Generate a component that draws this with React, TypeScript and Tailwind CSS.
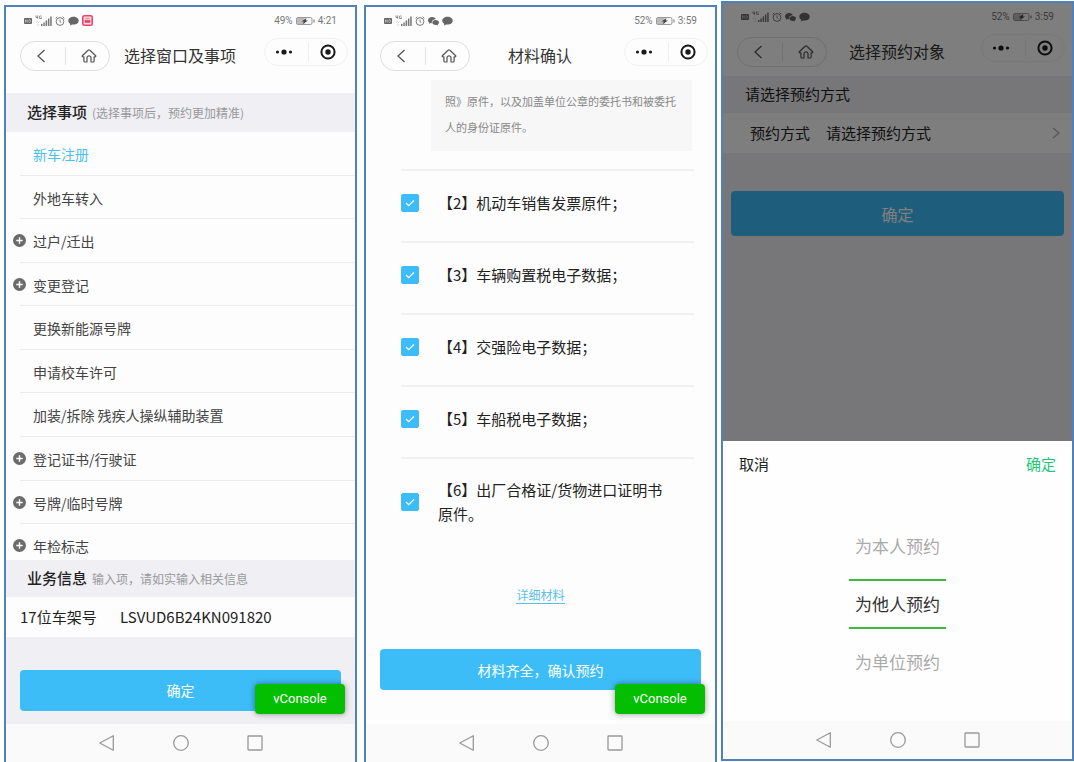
import React, { useState } from 'react';
import clsx from 'clsx';

interface StatusBarProps {
  battery: string;
  time: string;
  children: React.ReactNode;
}

interface ScreenProps {
  title: string;
  battery: string;
  time: string;
  statusIcons: React.ReactNode;
  className?: string;
  children: React.ReactNode;
}

const services = [
  { name: '新车注册', group: false },
  { name: '外地车转入', group: false },
  { name: '过户/迁出', group: true },
  { name: '变更登记', group: true },
  { name: '更换新能源号牌', group: false },
  { name: '申请校车许可', group: false },
  { name: '加装/拆除 残疾人操纵辅助装置', group: false },
  { name: '登记证书/行驶证', group: true },
  { name: '号牌/临时号牌', group: true },
  { name: '年检标志', group: true },
];

const materials = [
  '【2】机动车销售发票原件；',
  '【3】车辆购置税电子数据；',
  '【4】交强险电子数据；',
  '【5】车船税电子数据；',
  '【6】出厂合格证/货物进口证明书原件。',
];

const targets = ['为本人预约', '为他人预约', '为单位预约'];

const SignalIcons = () => (
  <>
    <svg className="h-[10px] w-[8px]" viewBox="0 0 8 10">
      <rect x="0" y="2" width="8" height="6" rx="1" fill="#666" />
      <path d="M1.5 3.5v3M3.2 3.5v3M1.5 5h1.7M5 3.5v3h.6l1-.8V4.3l-1-.8z" stroke="#ddd" strokeWidth=".6" fill="none" />
    </svg>
    <svg className="h-[12px] w-[17px]" viewBox="0 0 17 12">
      <path d="M1 .5v2h2M2.600 .5v3.300M6.500 1H4.600v2.500h1.900V2.300" stroke="#777" strokeWidth=".8" fill="none" />
      <path d="M1 8l1.500-1.500L4 8M1.500 10h3" stroke="#ccc" strokeWidth=".7" fill="none" />
      <path d="M6 9h1.500v2H6zM8.300 7.500h1.500V11H8.300zM10.600 5.500h1.500V11h-1.500zM12.900 3.500h1.500V11h-1.500zM15.200 1.500h1.500V11h-1.500z" fill="#777" />
    </svg>
    <svg className="h-[10px] w-[10px]" viewBox="0 0 10 10" fill="none" stroke="#777">
      <circle cx="5" cy="5.500" r="3.900" strokeWidth="1" />
      <path d="M5 3.500v2.200l1.300.8M.6 2.300L2.400.7M9.400 2.300L7.600.7" strokeWidth=".9" />
    </svg>
  </>
);

const WechatIcon = () => (
  <svg className="h-[10px] w-[11px]" viewBox="0 0 11 10" fill="#666">
    <path d="M4 1C1.800 1 0 2.400 0 4.200c0 1 .6 1.900 1.400 2.400L1 7.900l1.500-.8c.4.1.8.2 1.200.2C3.500 4.900 5.400 3.300 7.800 3.300 7.300 1.900 5.800 1 4 1z" />
    <path d="M11 6.500C11 5 9.500 3.900 7.700 3.900S4.300 5 4.300 6.500 5.900 9 7.700 9c.4 0 .8 0 1.100-.1L10 9.600l-.3-1.100c.8-.5 1.300-1.200 1.300-2z" />
  </svg>
);

const BubbleIcon = () => (
  <svg className="h-[10px] w-[11px]" viewBox="0 0 11 10" fill="#666">
    <path d="M5.500.8C2.500.8.3 2.500.3 4.700c0 1.300.8 2.400 2 3.100L2 9.600l2.200-1.100c.4.1.9.1 1.300.1 3 0 5.200-1.700 5.200-3.900S8.500.8 5.500.8z" />
  </svg>
);

const PinkIcon = () => (
  <svg className="h-[11px] w-[11px]" viewBox="0 0 11 11">
    <rect x=".8" y=".8" width="9.400" height="9.400" rx="1.500" fill="#fbdfe6" stroke="#ec4568" strokeWidth="1.600" />
    <path d="M3.500 3.300h4M3 5.200h5v2.200H3z" stroke="#ec4568" strokeWidth=".7" fill="#ec4568" />
  </svg>
);

const StatusBar: React.FC<StatusBarProps> = ({ battery, time, children }) => (
  <div className="flex h-[27px] shrink-0 items-center justify-between pr-[18px] pl-[18px] font-[Roboto,sans-serif] text-[10px] text-[#777]">
    <div className="flex items-center gap-[3px]">{children}</div>
    <div className="flex items-center gap-[3px]">
      <span>{battery}</span>
      <svg className="h-[8px] w-[19px]" viewBox="0 0 19 8">
        <rect x=".5" y=".5" width="15.500" height="7" rx="1.500" fill="#f4f4f4" stroke="#999" />
        <rect x="1" y="1" width="7.500" height="6" fill="#bbb" />
        <path d="M10.500 1L5.500 4.600h2.300L7 7l5-3.600H9.700z" fill="#444" />
        <path d="M18 2.500v3" stroke="#888" strokeWidth="1.200" />
      </svg>
      <span>{time}</span>
    </div>
  </div>
);

const Header = ({ title }: { title: string }) => (
  <header className="grid h-11 shrink-0 grid-cols-[90px_1fr_98px] items-center pr-[7px] pl-[14px]">
    <div className="flex h-[30px] items-center rounded-full border border-[#dedede]">
      <button type="button" aria-label="返回" className="flex flex-1 justify-center pr-1">
        <svg className="h-4 w-3" viewBox="0 0 12 16" fill="none" stroke="#555" strokeWidth="1.300">
          <path d="M9.500 2L3 8l6.500 6" />
        </svg>
      </button>
      <span className="h-[18px] w-px bg-[#e2e2e2]" />
      <button type="button" aria-label="首页" className="flex flex-1 justify-center pl-1">
        <svg className="h-4 w-4" viewBox="0 0 16 16" fill="none" stroke="#555" strokeWidth="1.200" strokeLinejoin="round" strokeLinecap="round">
          <path d="M6 14H3.900c-.6 0-1-.4-1-1V8.800H1.800c-.7 0-.9-.7-.5-1.100l5.800-5.500c.5-.5 1.300-.5 1.800 0l5.800 5.500c.4.4.2 1.100-.5 1.100h-1.100V13c0 .6-.4 1-1 1H10V9.800c0-1.200-.9-2-2-2s-2 .8-2 2z" />
        </svg>
      </button>
    </div>
    <h1 className="pb-0.5 text-center text-base text-[#333]">{title}</h1>
    <div className="flex justify-end pb-2">
      <div className="flex h-7 w-[84px] items-center rounded-full border border-[#f1f1f1]">
        <button type="button" aria-label="更多" className="flex flex-1 justify-center pr-1">
          <svg className="h-2 w-5" viewBox="0 0 20 8" fill="#1a1a1a">
            <circle cx="3.500" cy="4" r="1.600" />
            <circle cx="10" cy="4" r="2.600" />
            <circle cx="16.500" cy="4" r="1.600" />
          </svg>
        </button>
        <span className="h-[18px] w-px bg-[#f0f0f0]" />
        <button type="button" aria-label="关闭" className="flex flex-1 justify-center">
          <svg className="h-4 w-4" viewBox="0 0 16 16">
            <circle cx="8" cy="8" r="6.600" fill="none" stroke="#1a1a1a" strokeWidth="2" />
            <circle cx="8" cy="8" r="2.700" fill="#1a1a1a" />
          </svg>
        </button>
      </div>
    </div>
  </header>
);

const AndroidNav = () => (
  <nav className="flex h-[38px] shrink-0 items-center justify-center gap-[58px] bg-[#fafafa]">
    <button type="button" aria-label="后退">
      <svg className="h-4 w-4" viewBox="0 0 16 16" fill="none" stroke="#999" strokeWidth="1.300" strokeLinejoin="round">
        <path d="M14.300 .8v14.400L.8 8z" />
      </svg>
    </button>
    <button type="button" aria-label="主屏幕">
      <svg className="h-4 w-4" viewBox="0 0 16 16" fill="none" stroke="#999" strokeWidth="1.300">
        <circle cx="8" cy="8" r="7.300" />
      </svg>
    </button>
    <button type="button" aria-label="最近任务">
      <svg className="h-4 w-4" viewBox="0 0 16 16" fill="none" stroke="#999" strokeWidth="1.300">
        <rect x="1" y="1" width="14" height="14" rx=".8" />
      </svg>
    </button>
  </nav>
);

const VConsole = () => (
  <button
    type="button"
    className="absolute right-[10px] bottom-12 h-[30px] w-[90px] rounded bg-[#04be02] font-[Roboto,sans-serif] text-[13px] text-white shadow-[0_0_6px_rgba(0,0,0,0.4)]"
  >
    vConsole
  </button>
);

const Screen: React.FC<ScreenProps> = ({
  title,
  battery,
  time,
  statusIcons,
  className,
  children,
}) => (
  <section
    className={clsx(
      'relative flex min-w-0 flex-1 flex-col border-2 border-[#4f81bd] bg-[#fdfdfd]',
      className,
    )}
  >
    <StatusBar battery={battery} time={time}>
      {statusIcons}
    </StatusBar>
    <Header title={title} />
    {children}
  </section>
);

const ServiceScreen = () => {
  const [selected, setSelected] = useState('新车注册');
  const [vin, setVin] = useState('LSVUD6B24KN091820');

  return (
    <Screen
      title="选择窗口及事项"
      battery="49%"
      time="4:21"
      className="mt-[5px] mr-[7px] border-b-0"
      statusIcons={
        <>
          <SignalIcons />
          <BubbleIcon />
          <PinkIcon />
        </>
      }
    >
      <div className="mt-[15px] flex h-[39px] shrink-0 items-center bg-[#efeff4] pl-[21px]">
        <h2 className="text-[15px] font-medium text-[#222]">选择事项</h2>
        <span className="ml-[5px] text-xs text-[#999]">(选择事项后，预约更加精准)</span>
      </div>
      <ul className="flex flex-1 flex-col">
        {services.map((item) => (
          <li key={item.name} className="flex flex-1 last:h-9 last:flex-none">
            <span className="w-[14px] shrink-0 pt-[15px] pl-[7px]">
              {item.group && (
                <svg className="h-[13px] w-[13px]" viewBox="0 0 13 13">
                  <circle cx="6.500" cy="6.500" r="6.500" fill="#6b6b6b" />
                  <path d="M6.500 3.300v6.400M3.300 6.500h6.400" stroke="#fff" strokeWidth="1.400" />
                </svg>
              )}
            </span>
            <button
              type="button"
              className={clsx(
                'flex flex-1 items-start border-b border-[#ececec] pt-3 pl-[13px] text-left text-sm',
                item.name === '年检标志' && 'border-b-0',
                selected === item.name ? 'text-[#4bbfee]' : 'text-[#444]',
              )}
              onClick={() => setSelected(item.name)}
            >
              {item.name}
            </button>
          </li>
        ))}
      </ul>
      <div className="flex h-[37px] shrink-0 items-center bg-[#efeff4] pl-[21px]">
        <h2 className="text-[15px] font-medium text-[#222]">业务信息</h2>
        <span className="ml-[5px] text-xs text-[#999]">输入项，请如实输入相关信息</span>
      </div>
      <div className="flex h-10 shrink-0 items-center pl-[14px] text-[15px] text-[#222]">
        <label htmlFor="vin" className="w-[100px] shrink-0">
          17位车架号
        </label>
        <input
          id="vin"
          className="min-w-0 flex-1 bg-transparent outline-none"
          value={vin}
          onChange={(e) => setVin(e.target.value)}
        />
      </div>
      <div className="bg-[#efeff4] px-[14px] pt-[33px] pb-[13px]">
        <button type="button" className="h-[41px] w-full rounded bg-[#3dbdf8] pb-0.5 text-sm text-white">
          确定
        </button>
      </div>
      <VConsole />
      <AndroidNav />
    </Screen>
  );
};

const MaterialScreen = () => (
  <Screen
    title="材料确认"
    battery="52%"
    time="3:59"
    className="mt-[5px] mr-1 border-b-0"
    statusIcons={
      <>
        <SignalIcons />
        <WechatIcon />
        <BubbleIcon />
      </>
    }
  >
    <p className="mt-0.5 mr-[23px] mb-[18px] ml-[65px] h-[71px] shrink-0 bg-[#f7f7f7] px-[14px] pt-2 text-[11px] leading-[26px] text-[#888]">
      照》原件，以及加盖单位公章的委托书和被委托人的身份证原件。
    </p>
    <ul className="mr-[21px] ml-[35px]">
      {materials.map((text) => (
        <li key={text} className="h-18 border-t-2 border-[#f1f1f1] pb-1.5 last:h-[94px]">
          <label className="flex h-full items-center gap-[19px] pr-5">
            <span className="grid shrink-0 place-items-center">
              <input
                type="checkbox"
                defaultChecked
                className="peer col-start-1 row-start-1 h-[18px] w-[18px] appearance-none rounded-[2px] border border-[#3dbdf8] checked:bg-[#3dbdf8]"
              />
              <svg
                className="pointer-events-none invisible col-start-1 row-start-1 h-2.5 w-2.5 peer-checked:visible"
                viewBox="0 0 10 10"
                fill="none"
                stroke="#fff"
                strokeWidth="1.200"
              >
                <path d="M1 5l2.700 2.700L9 2.300" />
              </svg>
            </span>
            <span className="text-[15px] leading-6 text-[#222]">{text}</span>
          </label>
        </li>
      ))}
    </ul>
    <div className="flex flex-1 items-center justify-center pb-0.5">
      <a href="#detail" className="border-b border-[#5cc0e8] text-xs text-[#5cc0e8]">
        详细材料
      </a>
    </div>
    <div className="px-[14px] pt-2 pb-[34px]">
      <button type="button" className="h-[41px] w-full rounded bg-[#3dbdf8] text-sm text-white">
        材料齐全，确认预约
      </button>
    </div>
    <VConsole />
    <AndroidNav />
  </Screen>
);

const TargetScreen = () => {
  const [target, setTarget] = useState('为他人预约');

  return (
    <Screen
      title="选择预约对象"
      battery="52%"
      time="3:59"
      className="mt-px mb-px"
      statusIcons={
        <>
          <SignalIcons />
          <WechatIcon />
          <BubbleIcon />
        </>
      }
    >
      <div className="mt-0.5 flex flex-1 flex-col bg-[#efeff4] text-[15px] text-[#222]">
        <h2 className="flex h-[37px] items-center pl-[22px]">请选择预约方式</h2>
        <button type="button" className="flex h-10 items-center bg-[#fdfdfd] pr-3 pl-[27px] text-left">
          <span className="w-[76px]">预约方式</span>
          <span className="flex-1">请选择预约方式</span>
          <svg className="h-3 w-2" viewBox="0 0 8 12" fill="none" stroke="#aaa" strokeWidth="1.300">
            <path d="M1 1l6 5-6 5" />
          </svg>
        </button>
        <div className="px-2 pt-[38px]">
          <button type="button" className="h-[45px] w-full rounded bg-[#3dbdf8] text-base text-white">
            确定
          </button>
        </div>
      </div>

      {/* mask + bottom picker */}
      <div className="absolute inset-0 flex flex-col bg-black/50">
        <div className="flex-1" />
        <div className="flex h-[280px] shrink-0 flex-col bg-[#fefefe]">
          <div className="flex h-[46px] items-center justify-between px-4 text-[15px]">
            <button type="button" className="text-[#222]">
              取消
            </button>
            <button type="button" className="text-[#1ec876]">
              确定
            </button>
          </div>
          <div
            role="radiogroup"
            aria-label="预约方式"
            className="flex flex-1 flex-col items-center gap-2 pt-[34px]"
          >
            {targets.map((name) => (
              <label
                key={name}
                className="grid h-[50px] w-[97px] place-items-center border-y-2 border-transparent text-[17px] text-[#aaa] has-checked:border-[#3cbb3c] has-checked:text-[#333]"
              >
                <input
                  type="radio"
                  name="target"
                  className="col-start-1 row-start-1 h-full w-full appearance-none"
                  checked={target === name}
                  onChange={() => setTarget(name)}
                />
                <span className="col-start-1 row-start-1">{name}</span>
              </label>
            ))}
          </div>
        </div>
        <AndroidNav />
      </div>
    </Screen>
  );
};

const App: React.FC = () => (
  <main className="flex min-h-screen bg-white pl-1 font-['Noto_Sans_CJK_SC',sans-serif]">
    <ServiceScreen />
    <MaterialScreen />
    <TargetScreen />
  </main>
);

export default App;
